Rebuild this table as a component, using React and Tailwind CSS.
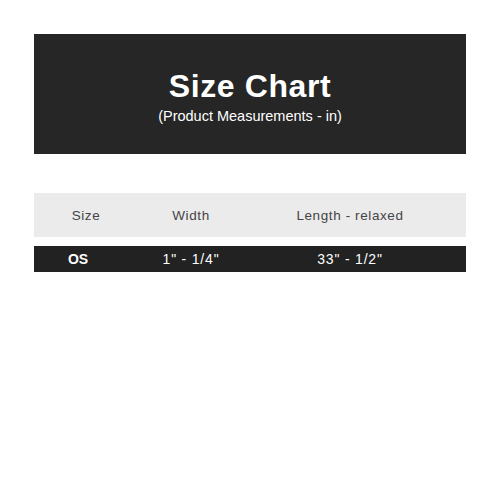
export default function App() {
  return (
    <div className="w-[500px] h-[500px] bg-white pt-[34px] px-[34px]" style={{ fontFamily: '"Liberation Sans", Arial, sans-serif' }}>
      <div className="h-[120px] bg-[#262626] flex flex-col items-center pt-[36px] text-white">
        <h1 className="text-[32px] font-bold leading-none tracking-[0.6px]">Size Chart</h1>
        <p className="text-[14.5px] leading-none mt-[7px]">(Product Measurements - in)</p>
      </div>

      <div className="mt-[39px] h-[44px] bg-[#ebebec] grid grid-cols-[104px_106px_1fr] items-center pt-[3px] text-[13.5px] text-[#444] tracking-[0.6px] font-light">
        <div className="text-center">Size</div>
        <div className="text-center">Width</div>
        <div className="text-center pr-[10px]">Length - relaxed</div>
      </div>

      <div className="mt-[9px] h-[26px] bg-[#222] grid grid-cols-[104px_106px_1fr] items-center text-[14px] text-white">
        <div className="text-center font-bold pr-[16px]">OS</div>
        <div className="text-center tracking-[0.8px]">1" - 1/4"</div>
        <div className="text-center tracking-[0.8px] pr-[10px]">33" - 1/2"</div>
      </div>
    </div>
  );
}
